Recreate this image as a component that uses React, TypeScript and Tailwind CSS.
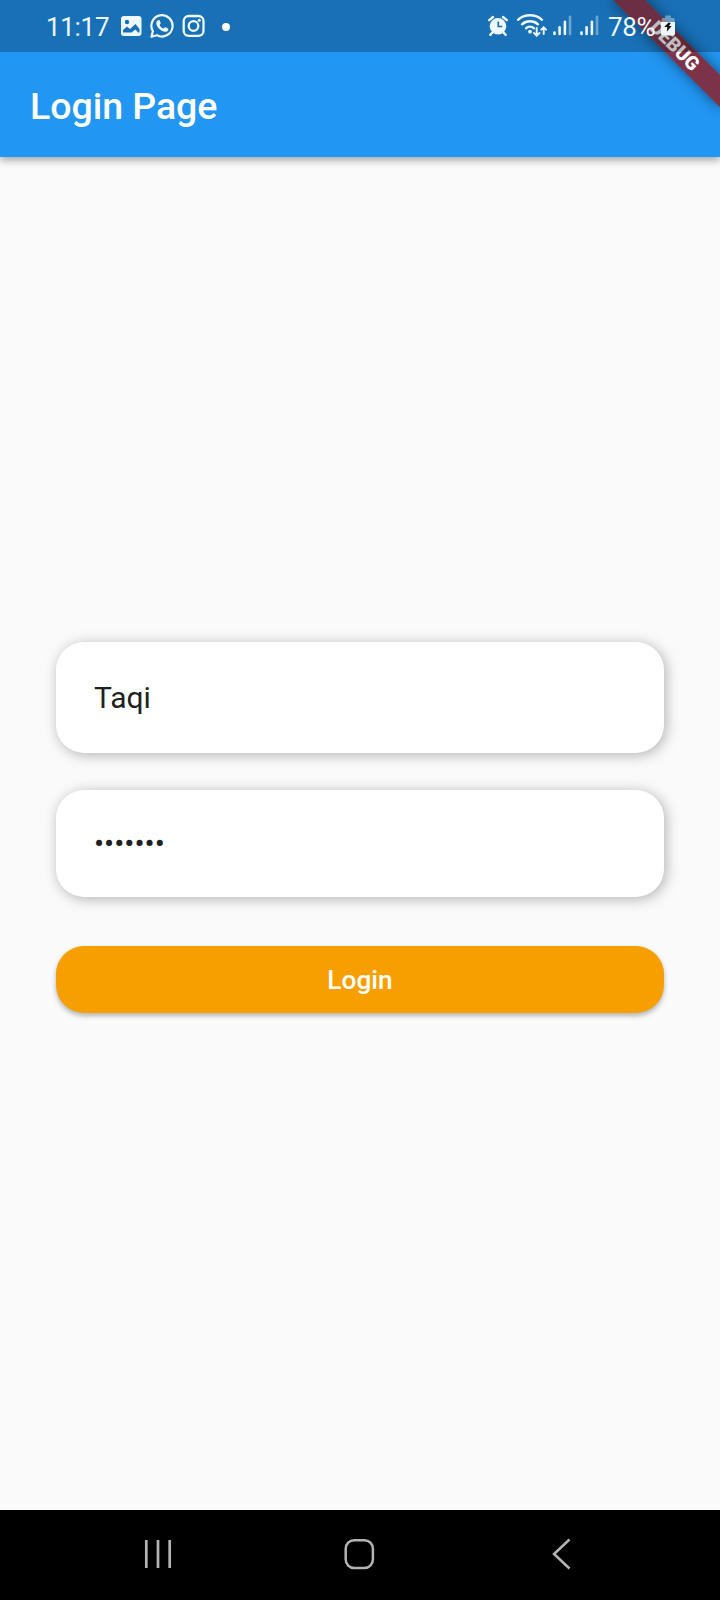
import React from 'react';

function StatusBar() {
  return (
    <div className="absolute inset-x-0 top-0 flex h-[52px] items-center bg-black/25 text-[#eef8ff]">
      <span className="ml-[46px] w-[71px] pt-[2px] text-[26px] leading-[52px] tracking-[-0.3px]">11:17</span>
      <svg className="ml-[2px] h-[26px] w-6 shrink-0" viewBox="119 14 24 26" fill="none">
        <rect x="121" y="17" width="20.500" height="20" rx="3" fill="currentColor" />
        <circle cx="127" cy="23" r="2.200" fill="#196fb6" />
        <path d="M123 33.500V31l4-3.500 3 2.500 5.500-5 4 5v3.500h-1.500l-2.500-3-4 3z" fill="#196fb6" />
      </svg>
      <svg className="ml-[6px] h-[26px] w-[26px] shrink-0" viewBox="149 14 26 26" fill="none">
        <path d="M151.400 37.800l1.500-5.500a10.600 10.600 0 1 1 4.100 3.900z" stroke="currentColor" strokeWidth="2.200" strokeLinejoin="round" />
        <path d="M157.400 21.600c.8-.9 1.900-.9 2.300 0l1 2.400c.2.6-.9 1.500-1.100 2 .8 1.700 2.200 2.900 4 3.600.6-.4 1.300-1.700 2-1.400l2.400 1.200c.7.5.2 2.100-.6 2.800-1.500 1.100-3.600.7-5.800-.5-2.300-1.300-4.200-3.400-5-5.700-.6-1.800-.2-3.400.8-4.400z" fill="currentColor" />
      </svg>
      <svg className="ml-[6px] h-[26px] w-[26px] shrink-0" viewBox="181 14 26 26" fill="none" stroke="currentColor">
        <rect x="183.700" y="17" width="19.800" height="19.800" rx="5" strokeWidth="2.300" />
        <circle cx="193.500" cy="27" r="4.800" strokeWidth="2.300" />
        <circle cx="199.300" cy="21.300" r="1.500" fill="currentColor" stroke="none" />
      </svg>
      <span className="ml-[15px] mt-px size-2 shrink-0 rounded-full bg-white" />

      <svg className="ml-auto h-[26px] w-6 shrink-0" viewBox="486 14 24 26" fill="none">
        <circle cx="498" cy="27.300" r="8.300" fill="currentColor" />
        <path d="M489.200 21.200l3.800-3.200M506.800 21.200L503 18M492.500 33.500l-2.200 2.400M503.500 33.500l2.200 2.400" stroke="currentColor" strokeWidth="2.400" strokeLinecap="round" />
        <path d="M498.300 22.500v5h4" stroke="#196fb6" strokeWidth="1.700" />
      </svg>
      <svg className="ml-[5px] h-[26px] w-8 shrink-0" viewBox="515 14 32 26" fill="none" stroke="currentColor" strokeLinecap="round">
        <path d="M518 20.800c6.500-6 17.500-6 24 0M522 25.300c4.500-4 11.500-4 16 0M526 29.300c2.300-2 5.700-2 8 0" strokeWidth="2.400" />
        <circle cx="530" cy="32.700" r="1.900" fill="currentColor" stroke="none" />
        <path d="M536.700 29v7.500M534 34l2.700 2.700 2.700-2.700M543.700 35v-6.500M541.300 30.700l2.400-2.400 2.400 2.400" strokeWidth="1.900" />
      </svg>
      <Signal className="ml-[4px]" />
      <Signal className="ml-[5px]" />
      <span className="ml-[8px] w-[50px] whitespace-nowrap pt-[2px] text-[26px] leading-[52px] tracking-[-0.3px]">78%</span>
      <svg className="ml-[1px] mr-[43px] h-[26px] w-[18px] shrink-0" viewBox="659 14 18 26" fill="none">
        <path d="M661.500 23v-2.500q0-1.500 1.500-1.500h2.200v-2.500h5.800V19h2.200q1.500 0 1.500 1.500V23z" fill="currentColor" opacity=".4" />
        <path d="M661 23h14v11.500q0 2-2 2h-10q-2 0-2-2z" fill="currentColor" />
        <path d="M668.500 23.500l-4.300 4.500h3l-.3 4.500 4.900-5.500h-2.800l1.800-3z" fill="#151515" />
      </svg>
    </div>
  );
}

function Signal({ className }: { className: string }) {
  return (
    <svg className={`h-[26px] w-[22px] shrink-0 ${className}`} viewBox="551 14 22 26" fill="currentColor">
      <rect x="553.200" y="32.300" width="2.600" height="4" rx="1.200" />
      <rect x="558.300" y="27" width="2.600" height="9.300" rx="1.200" />
      <rect x="563.600" y="21.500" width="2.600" height="14.800" rx="1.200" />
      <rect x="568.700" y="16.500" width="2.600" height="19.800" rx="1.200" opacity=".4" />
    </svg>
  );
}

function DebugBanner() {
  return (
    <div className="absolute inset-0 overflow-hidden">
      <div className="absolute left-[645px] top-[52.5px] flex h-[22.5px] w-[150px] origin-[75px_-52.5px] rotate-45 items-center justify-center bg-linear-to-r from-[#8f3e59] from-30% to-[#7c3349] to-60% text-[19.125px] font-black leading-none text-white shadow-[0_0_14px_rgba(0,0,0,0.5)]">
        DEBUG
      </div>
    </div>
  );
}

export default function App() {
  return (
    <div className="flex h-[1600px] w-[720px] flex-col overflow-hidden bg-[#fafafa] font-[Roboto,sans-serif]">
      <header className="relative h-[157px] shrink-0 bg-[#2196f3] pt-[53px] shadow-[0_3px_8px_rgba(0,0,0,0.36)]">
        <h1 className="pl-[30px] text-[37.5px] font-medium leading-[107px] tracking-[-0.05px] text-white">Login Page</h1>
        <DebugBanner />
        <StatusBar />
      </header>
      <main className="flex flex-1 flex-col px-14 pt-[485px]">
        <div className="flex h-[111px] items-center rounded-[28px] bg-white px-[38px] text-[30px] text-[#212121] shadow-[2px_2px_14px_rgba(0,0,0,0.29)]">
          Taqi
        </div>
        <div className="mt-[37px] flex h-[107px] items-center rounded-[28px] bg-white px-[38px] text-[30px] text-[#212121] shadow-[2px_2px_14px_rgba(0,0,0,0.29)]">
          •••••••
        </div>
        <button className="mt-[49px] h-[67px] rounded-[28px] bg-[#f79f00] pt-[2px] text-[26.25px] font-medium text-white shadow-[0_3px_5px_rgba(0,0,0,0.28)]">
          Login
        </button>
      </main>
      <nav className="flex h-[90px] shrink-0 items-center bg-black pl-[142px] pb-[2px] text-[#b4b4b4]">
        <svg className="h-8 w-8" viewBox="142 1538 32 32" stroke="currentColor" strokeWidth="2.700">
          <path d="M146.300 1540v28M158 1540v28M169.700 1540v28" />
        </svg>
        <svg className="ml-[169px] h-8 w-8" viewBox="343 1538 32 32" fill="none" stroke="currentColor" strokeWidth="2.500">
          <rect x="345.700" y="1540.200" width="27.200" height="27.800" rx="8.500" />
        </svg>
        <svg className="ml-[171px] h-8 w-8" viewBox="546 1538 32 32" fill="none" stroke="currentColor" strokeWidth="2.500">
          <path d="M569.500 1539.500l-15.500 14.500 15.500 14.500" />
        </svg>
      </nav>
    </div>
  );
}
